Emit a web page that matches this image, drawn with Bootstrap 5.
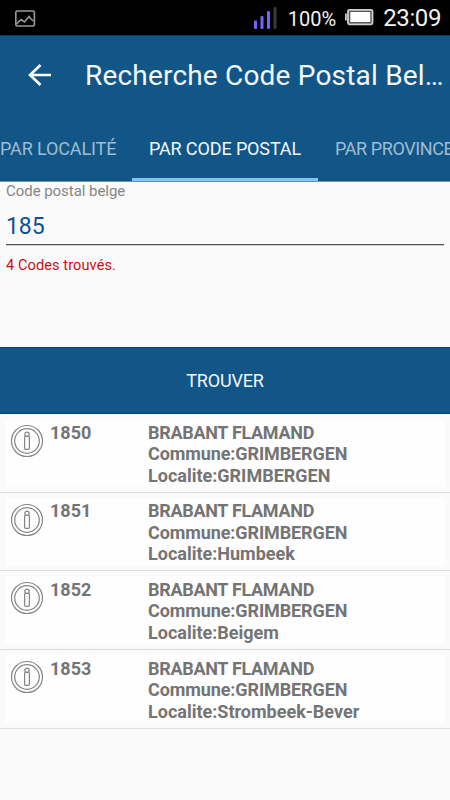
<!DOCTYPE html>
<html lang="fr">
<head>
<meta charset="utf-8">
<meta name="viewport" content="width=device-width, initial-scale=1">
<title>Recherche Code Postal Belge</title>
<link rel="stylesheet" href="https://cdn.jsdelivr.net/npm/bootstrap@5.3.0/dist/css/bootstrap.min.css">
<style>
:root{--brand:#125688}
html,body{height:100%}
body{background:#fafafa;font-family:Roboto,"Liberation Sans",sans-serif;line-height:1;overflow:hidden}
svg{display:block;flex:none}
.statusbar{height:36px;background:#000;color:#f2f2f2;border-bottom:1px solid #0c3a5c;padding-top:2px}
.picture{margin-left:15px}
.battery-pct{font-size:20px;margin-left:10px}
.battery{margin:-3px 9px 0 9px}
.clock{font-size:24px;letter-spacing:-.4px;margin:-2px 9px 0 0}
.appbar{height:79px;background:var(--brand)}
.back{margin:-2px 33px 0 28px}
.appbar-title{font-size:28px;font-weight:400;color:#f4f8fb;letter-spacing:.19px}
.tabs{height:67px;background:var(--brand);margin:0;border-bottom:1px solid #6f8fb0}
.tabs .nav-link{height:66px;border-radius:0;padding:0;font-size:18px;letter-spacing:-.12px;line-height:68px;color:#9fbcd1;flex:none}
.tabs .nav-link.active{color:#f4f8fb;background:none;border-bottom:3px solid #7cc8ec;height:66px}
.tab-l{width:132px}.tab-c{width:186px}
.tabs .tab-r{width:150px;padding-left:17px;letter-spacing:-.4px}
.search-area{height:165px;padding:0 6px}
.field-label{font-size:15px;letter-spacing:-.05px;color:#858585;padding-top:2px}
.field-input,.field-input:focus{font-size:23px;letter-spacing:-.1px;color:#125091;background:none;border:0;border-bottom:1px solid #555;border-radius:0;box-shadow:0 1px #ccc;height:36px;line-height:36px;margin-top:10px}
.field-msg{font-size:14.5px;letter-spacing:.12px;color:#cb0d12;margin-top:14px}
.btn-find,.btn-find:hover{height:67px;background:var(--brand);border:1px solid #0b3f77;border-width:1px 0;color:#f1f6fa;font-size:18px;letter-spacing:-.15px;line-height:1}
.result{height:78.7px;padding:5px;background:none;border-color:#dcdcdc}
.result-body{height:68px;background:#fefefe;color:#747474;font-weight:700;font-size:18px;line-height:21.6px}
.info{margin:5px 6px 0 5px}
.code{width:98px}
.code,.place{padding-top:2.5px}
.town{letter-spacing:-.1px}
.region{letter-spacing:-.3px}
</style>
</head>
<body class="d-flex flex-column">
<svg class="position-absolute" width="0" height="0"><defs><g id="info" fill="none" stroke="#858585" stroke-width="1.200"><circle cx="17" cy="17" r="15.500"/><circle cx="17" cy="17" r="12.300"/><rect x="14.600" y="12.300" width="4.800" height="13" rx="1"/><circle cx="17" cy="10.300" r="2.200"/></g></defs></svg>
<header>
  <div class="statusbar d-flex align-items-center">
    <svg class="picture me-auto" width="21" height="18" viewBox="0 0 21 18" fill="none" stroke="#999" stroke-width="1.600"><rect x=".8" y="1" width="18.600" height="15" rx="1.500"/><path d="M1.500 14 6 9.500 9.500 12 14 6.500 16 9 18.500 11"/></svg>
    <svg width="24" height="28" viewBox="0 0 24 28"><g fill="#7461ff"><rect x="0" y="15.500" width="3" height="8.500" rx="1"/><rect x="6.500" y="11" width="3" height="13" rx="1"/><rect x="13" y="6" width="3" height="18" rx="1"/></g><rect x="19.500" y="2" width="3" height="22" rx="1" fill="#383838"/></svg>
    <span class="battery-pct">100%</span>
    <svg class="battery" width="29" height="18" viewBox="0 0 29 18"><rect x="3" y="1.800" width="24.500" height="14.500" rx="1.500" fill="#555" stroke="#d0d0d0" stroke-width="1.800"/><rect x="5.300" y="4" width="20" height="10" fill="#fff"/><rect x="0" y="5.500" width="1.800" height="7" fill="#ccc"/></svg>
    <span class="clock">23:09</span>
  </div>
  <div class="appbar d-flex align-items-center">
    <svg class="back" width="24" height="24" viewBox="0 0 24 24" fill="none" stroke="#fff" stroke-width="2.600"><path d="M12.500 2 2 12 12.500 22M2 12H23"/></svg>
    <h1 class="appbar-title mb-0 text-nowrap">Recherche Code Postal Bel…</h1>
  </div>
  <nav class="tabs nav flex-nowrap overflow-hidden text-nowrap">
    <a class="nav-link tab-l" href="#">PAR LOCALITÉ</a>
    <a class="nav-link tab-c active text-center" href="#">PAR CODE POSTAL</a>
    <a class="nav-link tab-r" href="#">PAR PROVINCE</a>
  </nav>
</header>
<main>
  <form class="search-area">
    <label class="field-label d-block" for="cp">Code postal belge</label>
    <input class="field-input form-control p-0" id="cp" value="185">
    <div class="field-msg">4 Codes trouvés.</div>
  </form>
  <button class="btn btn-find w-100 rounded-0 p-0 d-block" type="button">TROUVER</button>
  <ul class="list-group list-group-flush">
    <li class="list-group-item result"><div class="result-body d-flex"><svg class="info" width="34" height="34" viewBox="0 0 34 34"><use href="#info"/></svg><span class="code">1850</span><div class="place"><span class="region">BRABANT FLAMAND</span><br><span class="town">Commune:GRIMBERGEN</span><br>Localite:GRIMBERGEN</div></div></li>
    <li class="list-group-item result"><div class="result-body d-flex"><svg class="info" width="34" height="34" viewBox="0 0 34 34"><use href="#info"/></svg><span class="code">1851</span><div class="place"><span class="region">BRABANT FLAMAND</span><br><span class="town">Commune:GRIMBERGEN</span><br>Localite:Humbeek</div></div></li>
    <li class="list-group-item result"><div class="result-body d-flex"><svg class="info" width="34" height="34" viewBox="0 0 34 34"><use href="#info"/></svg><span class="code">1852</span><div class="place"><span class="region">BRABANT FLAMAND</span><br><span class="town">Commune:GRIMBERGEN</span><br>Localite:Beigem</div></div></li>
    <li class="list-group-item result border-bottom"><div class="result-body d-flex"><svg class="info" width="34" height="34" viewBox="0 0 34 34"><use href="#info"/></svg><span class="code">1853</span><div class="place"><span class="region">BRABANT FLAMAND</span><br><span class="town">Commune:GRIMBERGEN</span><br>Localite:Strombeek-Bever</div></div></li>
  </ul>
</main>
<script src="https://cdn.jsdelivr.net/npm/bootstrap@5.3.0/dist/js/bootstrap.bundle.min.js"></script>
</body>
</html>
